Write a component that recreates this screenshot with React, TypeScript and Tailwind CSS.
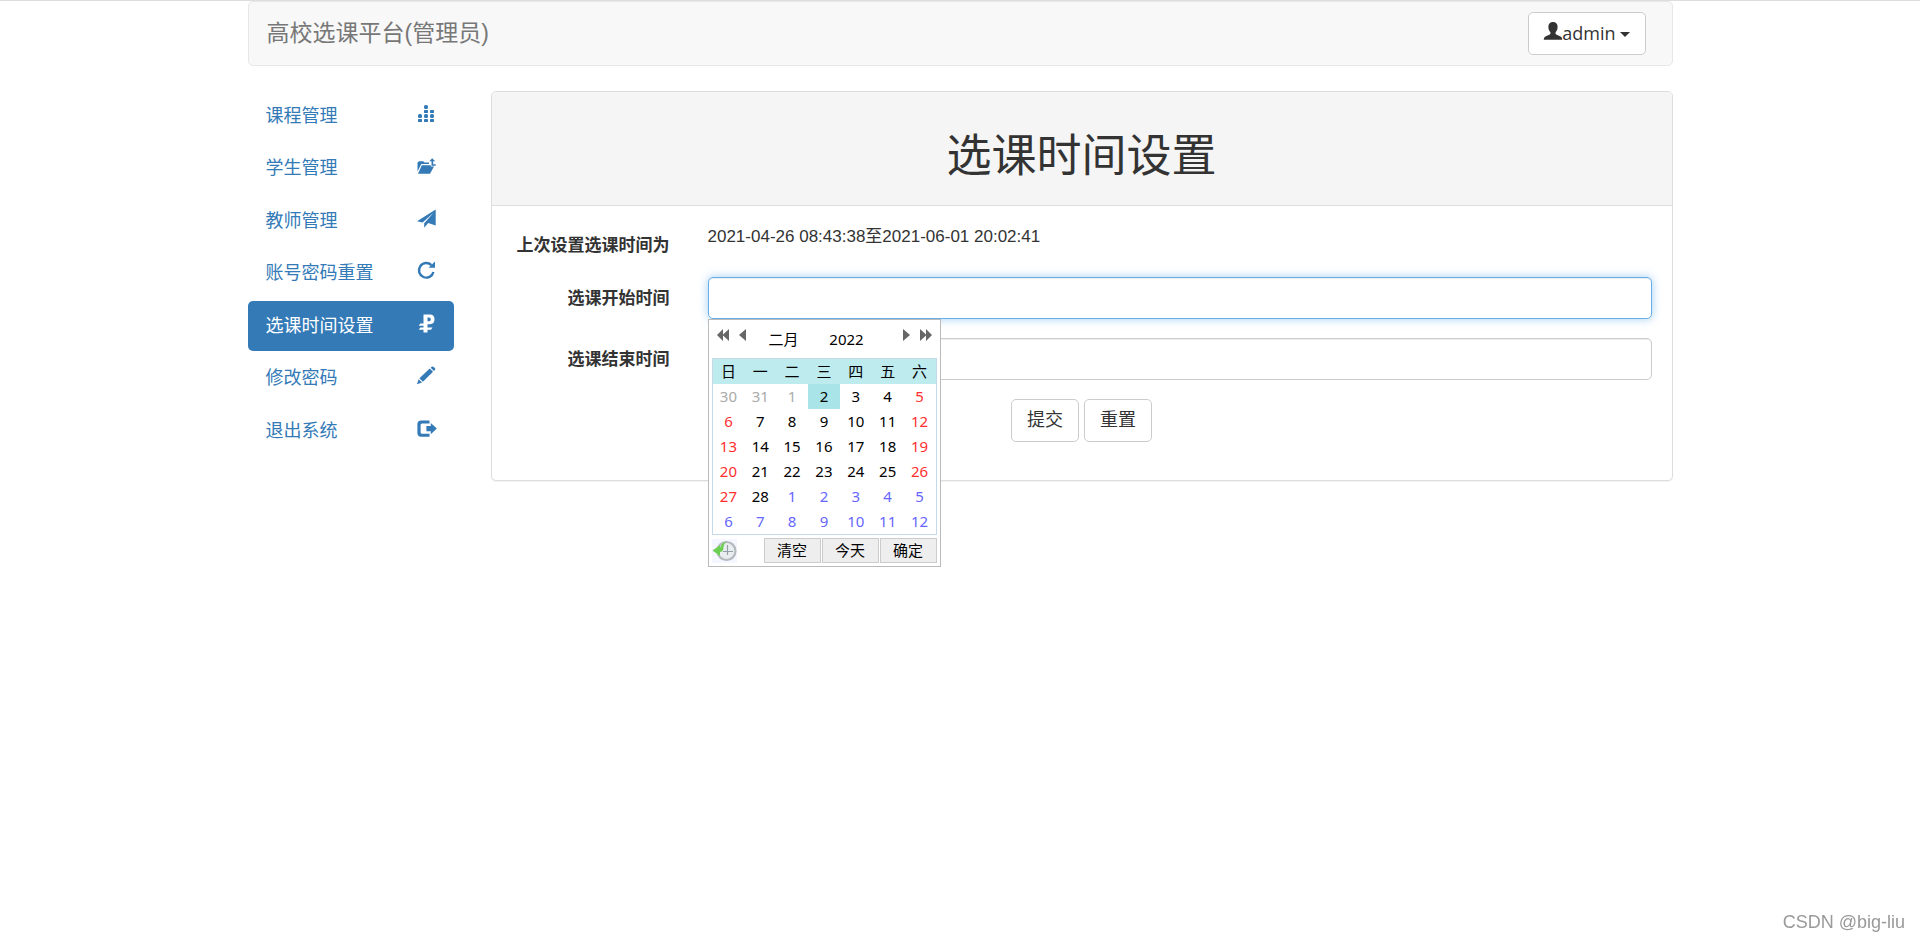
import type { ReactNode } from 'react';

const FONT_CJK = "font-['Liberation_Sans','Noto_Sans_CJK_SC',sans-serif]";
const FONT_UI = "font-['Noto_Sans','Noto_Sans_CJK_SC',sans-serif]";

function Glyph({ children }: { children: ReactNode }) {
  return (
    <svg viewBox="0 0 18 18" className="w-[18px] h-[18px] mb-[5px] shrink-0 overflow-visible" fill="currentColor" aria-hidden="true">
      {children}
    </svg>
  );
}

const NAV = [
  {
    title: '课程管理',
    active: false,
    icon: (
      <>
        <rect x="7" y="0" width="4" height="4" rx="1.5" />
        <rect x="7" y="5" width="4" height="3" rx="0.4" />
        <rect x="13" y="5" width="4" height="3" rx="0.4" />
        <rect x="1" y="9" width="4" height="4" rx="1.5" />
        <rect x="7" y="9" width="4" height="4" rx="1.5" />
        <rect x="13" y="9" width="4" height="4" rx="1.5" />
        <rect x="1" y="14" width="4" height="3" rx="0.4" />
        <rect x="7" y="14" width="4" height="3" rx="0.4" />
        <rect x="13" y="14" width="4" height="3" rx="0.4" />
      </>
    ),
  },
  {
    title: '学生管理',
    active: false,
    icon: (
      <>
        <path d="M0.5 14.5V5.5L2 4.200h4.200l1.300 1.300h4.500V7H4.300L0.500 14.500z" />
        <path d="M4.800 8.200h9v1.300h3.200L13 16.800H1L4.800 8.200z" />
        <path d="M15.200 1.200l3 3.100h-2v2.900h2.500v1.500h-4.200V4.300h-2.200l2.900-3.100z" />
      </>
    ),
  },
  {
    title: '教师管理',
    active: false,
    icon: <path d="M18.7-0.6L0 11.2l5.6 1.4L16.8 2.6 7.2 13.2v4.5l3-3.5 1-1.2 7.5 2.6V-0.6z" />,
  },
  {
    title: '账号密码重置',
    active: false,
    icon: (
      <>
        <path d="M14.4 3.1A7.3 7.3 0 1 0 16.4 10" fill="none" stroke="currentColor" strokeWidth="2.4" />
        <path d="M18-0.6V5.8h-6.4L18-0.6z" />
      </>
    ),
  },
  {
    title: '选课时间设置',
    active: true,
    icon: (
      <>
        <path
          fillRule="evenodd"
          d="M6.500-0.600h6.500Q17.500-0.600 17.500 4.200T13 9.200h-2.500V17.400h-4V-0.600zM10.500 2.600v3.600h1.700q1.600 0 1.600-1.800t-1.600-1.800h-1.700z"
        />
        <path d="M3.300 8.500H7v2.200H1.800z" />
        <path d="M3.300 12.500H15.500l-1.500 2.300H1.800z" />
      </>
    ),
  },
  {
    title: '修改密码',
    active: false,
    icon: (
      <>
        <path d="M0 17.2l1.6-5L5 15.6 0 17.2z" />
        <path d="M2.4 11.2L12.8 1.6l3.2 3.2L5.9 14.8 2.4 11.2z" />
        <path d="M13.7 0.8l1-1q1-.8 2 .1l1.2 1.2q.9 1 0 2l-1 1-3.2-3.3z" />
      </>
    ),
  },
  {
    title: '退出系统',
    active: false,
    icon: (
      <>
        <path d="M12.5 0.5v3H5Q3.6 3.5 3.6 5v7.2q0 1.5 1.4 1.5h7.5v3H4.2Q0.4 16.7 0.4 13V4.2Q0.4 0.5 4.2 0.5h8.3z" />
        <path d="M9.4 6h4.4V3l6 5.6-6 5.6v-3H9.4V6z" />
      </>
    ),
  },
];

const WEEKDAYS = ['日', '一', '二', '三', '四', '五', '六'];

const WEEKS = [
  [30, 31, 1, 2, 3, 4, 5],
  [6, 7, 8, 9, 10, 11, 12],
  [13, 14, 15, 16, 17, 18, 19],
  [20, 21, 22, 23, 24, 25, 26],
  [27, 28, 1, 2, 3, 4, 5],
  [6, 7, 8, 9, 10, 11, 12],
];

function dayClass(week: number, col: number) {
  const index = week * 7 + col;
  if (index < 3) return 'text-[#aaa]';
  if (index === 3) return 'bg-[#a9e4e9] text-black';
  if (index > 29) return 'text-[#6666ff]';
  if (col === 0 || col === 6) return 'text-[#ff2f2f]';
  return 'text-black';
}

function Navbar() {
  return (
    <nav className="flex items-center justify-between h-[65px] pl-[18px] pr-[26px] mb-[25px] bg-[#f8f8f8] border border-[#e7e7e7] rounded-[5px]">
      <a href="#home" className="text-[23px] leading-[25px] text-[#777]">
        高校选课平台(管理员)
      </a>
      <button
        type="button"
        className="flex items-center h-[43px] px-[15px] bg-white border border-[#ccc] rounded-[5px] font-['Open_Sans','Noto_Sans',sans-serif] text-[18px] text-[#333]"
      >
        <Glyph>
          <path d="M9 0c3 0 4.8 2.2 4.6 5.3-.1 2-.8 3.6-1.8 4.7-.5.7-.4 1.9.4 2.4l4.4 2q1.7.8 1.7 3.3H-.3q0-2.500 1.700-3.300l4.400-2c.8-.5.9-1.700.4-2.400-1-1.100-1.700-2.700-1.800-4.700C4.200 2.200 6 0 9 0z" />
        </Glyph>
        admin
        <svg viewBox="0 0 10 5" className="w-[10px] h-[5px] ml-1 mt-0.5" fill="currentColor" aria-hidden="true">
          <path d="M0 0h10L5 5z" />
        </svg>
      </button>
    </nav>
  );
}

function Sidebar() {
  return (
    <ul className="flex flex-col justify-between w-[206px] h-[365px] shrink-0">
      {NAV.map((item) => (
        <li key={item.title}>
          <a
            href="#nav"
            className={
              item.active
                ? 'flex items-center justify-between h-[50px] pl-[18px] pr-[19px] rounded-[5px] bg-[#337ab7] text-white'
                : 'flex items-center justify-between h-[50px] pl-[18px] pr-[19px] rounded-[5px] text-[#337ab7]'
            }
          >
            {item.title}
            <Glyph>{item.icon}</Glyph>
          </a>
        </li>
      ))}
    </ul>
  );
}

function DatePicker() {
  const footerButton = 'w-[57px] h-[25px] bg-[#eee] border border-[#ccc] leading-none';
  return (
    <div className={`absolute left-0 top-full z-10 w-[233px] px-[3px] bg-white border border-[#bbb] text-[15px] text-black ${FONT_UI}`}>
      <div className="flex h-[38px] text-[#666]">
        <button type="button" aria-label="上一年" className="flex items-center justify-center w-[22px] h-[29px]">
          <svg viewBox="0 0 12 12" className="w-3 h-3" fill="currentColor">
            <path d="M6 0v12L0 6zM12 0v12L5.5 6z" />
          </svg>
        </button>
        <button type="button" aria-label="上个月" className="flex items-center justify-center w-[17px] h-[29px]">
          <svg viewBox="0 0 7 12" className="w-[7px] h-3" fill="currentColor">
            <path d="M7 0v12L0 6z" />
          </svg>
        </button>
        <input aria-label="月份" defaultValue="二月" className="w-[66px] pt-px text-center text-black outline-none" />
        <input aria-label="年份" defaultValue="2022" className="w-[60px] pt-px text-center text-black outline-none" />
        <button type="button" aria-label="下个月" className="flex items-center justify-center w-[17px] h-[29px] ml-auto">
          <svg viewBox="0 0 7 12" className="w-[7px] h-3" fill="currentColor">
            <path d="M0 0v12l7-6z" />
          </svg>
        </button>
        <button type="button" aria-label="下一年" className="flex items-center justify-center w-[22px] h-[29px]">
          <svg viewBox="0 0 12 12" className="w-3 h-3" fill="currentColor">
            <path d="M0 0v12l6.5-6zM6 0v12l6-6z" />
          </svg>
        </button>
      </div>
      <div className="border border-[#c5d9e8]">
        <table className="w-full table-fixed border-collapse text-center">
          <thead>
            <tr className="h-[25px] bg-[#bdebee]">
              {WEEKDAYS.map((day) => (
                <th key={day} className="p-0 font-normal leading-[25px]">
                  {day}
                </th>
              ))}
            </tr>
          </thead>
          <tbody>
            {WEEKS.map((week, w) => (
              <tr key={w} className="h-[25px]">
                {week.map((day, d) => (
                  <td key={d} className={`p-0 leading-[25px] ${dayClass(w, d)}`}>
                    {day}
                  </td>
                ))}
              </tr>
            ))}
          </tbody>
        </table>
      </div>
      <div className="flex items-center gap-px h-[31px]">
        <svg viewBox="0 0 25 24" className="w-[25px] h-6 mr-auto" aria-hidden="true">
          <path d="M0 0h25v24H0z" fill="#f5f6ff" />
          <circle cx="14.5" cy="12" r="9" fill="#e9edef" stroke="#b4babd" strokeWidth="2.2" />
          <path d="M15.5 6v6.5H21M15.5 12.5H11M15.5 12.5V16" fill="none" stroke="#93a0a8" strokeWidth="1.2" />
          <path d="M0.5 11.5L8 6.200v2.800q1.500-5 6.500-7-3.500 4-3.200 8.500-.3 2-3.300 2.500V17z" fill="#6bcf52" />
        </svg>
        <button type="button" className={footerButton}>清空</button>
        <button type="button" className={footerButton}>今天</button>
        <button type="button" className={footerButton}>确定</button>
      </div>
    </div>
  );
}

function TimeForm() {
  const row = 'flex gap-[38px] mb-[19px]';
  const label = 'w-[158px] shrink-0 pt-[9px] text-right text-[17px] font-bold leading-[25px]';
  const button = 'h-[43px] px-[15px] bg-white border border-[#ccc] rounded-[5px]';
  return (
    <form className="pt-[18px] pb-[19px] px-5">
      <div className={row}>
        <span className={label}>上次设置选课时间为</span>
        <p className="text-[17px] leading-[25px]">2021-04-26 08:43:38至2021-06-01 20:02:41</p>
      </div>
      <div className={row}>
        <label htmlFor="start" className={label}>选课开始时间</label>
        <div className="relative grow">
          <input
            id="start"
            className="block w-full h-[42px] px-[15px] bg-white border border-[#66afe9] rounded-[5px] outline-none shadow-[inset_0_1px_1px_rgba(0,0,0,0.075),0_0_10px_rgba(102,175,233,0.6)]"
          />
          <DatePicker />
        </div>
      </div>
      <div className={row}>
        <label htmlFor="end" className={label}>选课结束时间</label>
        <input
          id="end"
          className="block grow h-[42px] px-[15px] bg-white border border-[#ccc] rounded-[5px] outline-none shadow-[inset_0_1px_1px_rgba(0,0,0,0.075)]"
        />
      </div>
      <div className="flex justify-center gap-[5px] mb-[19px]">
        <button type="button" className={button}>提交</button>
        <button type="reset" className={button}>重置</button>
      </div>
    </form>
  );
}

export default function App() {
  return (
    <div className={`min-h-screen bg-white border-t border-[#ddd] text-[18px] text-[#333] ${FONT_CJK}`}>
      <div className="w-full max-w-[1425px] mx-auto">
        <Navbar />
        <div className="flex items-start gap-[37px]">
          <Sidebar />
          <main className="grow bg-white border border-[#ddd] rounded-[5px] shadow-[0_1px_1px_rgba(0,0,0,0.05)]">
            <header className="pt-10 pb-[23px] bg-[#f5f5f5] border-b border-[#ddd] rounded-t-[4px]">
              <h1 className="text-center text-[45px] leading-[50px]">选课时间设置</h1>
            </header>
            <TimeForm />
          </main>
        </div>
      </div>
      <div className="fixed right-[15px] bottom-2 text-[#999] leading-6">CSDN @big-liu</div>
    </div>
  );
}
